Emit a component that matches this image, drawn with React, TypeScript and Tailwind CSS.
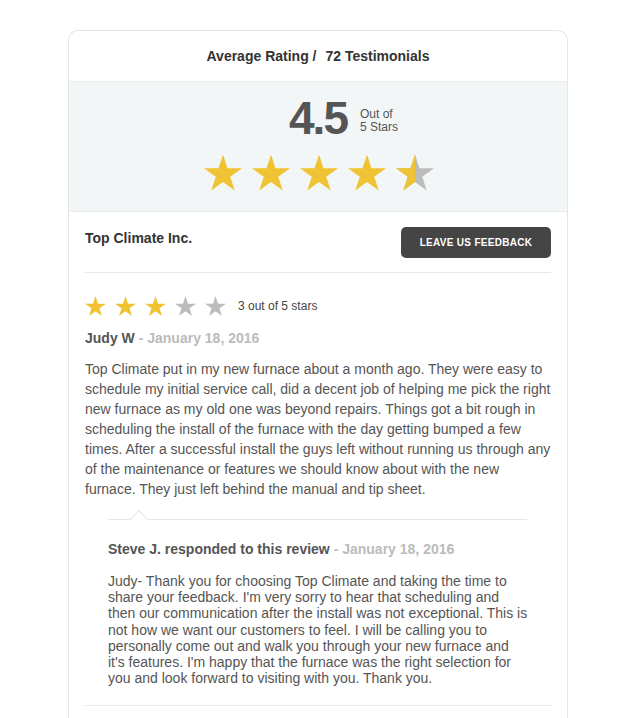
import React from "react";

const STAR = "M47.55 0 L58.78 34.55 L95.1 34.55 L65.71 55.9 L76.94 90.45 L47.55 69.1 L18.16 90.45 L29.39 55.9 L0 34.55 L36.32 34.55 Z";

const Star = ({ fill, className }: { fill: "full" | "half" | "empty"; className: string }) => (
  <svg viewBox="0 0 95.1 90.45" className={className}>
    <defs>
      <clipPath id="half-left">
        <rect x="0" y="0" width="47.55" height="90.45" />
      </clipPath>
    </defs>
    <path d={STAR} fill={fill === "full" ? "#f1c232" : "#bcbcbc"} />
    {fill === "half" && <path d={STAR} fill="#f1c232" clipPath="url(#half-left)" />}
  </svg>
);

const reply = [
  "Judy- Thank you for choosing Top Climate and taking the time to",
  "share your feedback. I'm very sorry to hear that scheduling and",
  "then our communication after the install was not exceptional. This is",
  "not how we want our customers to feel. I will be calling you to",
  "personally come out and walk you through your new furnace and",
  "it's features. I'm happy that the furnace was the right selection for",
  "you and look forward to visiting with you. Thank you.",
];

export default function App() {
  return (
    <div className="min-h-[718px] bg-white pt-[30px] font-['Liberation_Sans',Arial,sans-serif]">
      <div className="ml-[68px] w-[500px] h-[688px] overflow-hidden rounded-t-[10px] border border-b-0 border-[#e6e6e6]">
        {/* header */}
        <div className="h-[50px] flex items-center justify-center text-[14px] font-bold text-[#333]">
          <span>Average Rating /</span>
          <span className="ml-[9px]">72 Testimonials</span>
        </div>

        {/* average */}
        <div className="bg-[#f3f6f7] border-y border-[#e9eced] pt-[13px] pb-[20px]">
          <div className="grid grid-cols-[1fr_auto_1fr]">
            <div />
            <div className="text-[46px] leading-[46px] font-bold tracking-[-2px] text-[#555]">4.5</div>
            <div className="pl-[13px] pt-[13px] text-[12px] leading-[13px] text-[#555]">
              <div>Out of</div>
              <div>5 Stars</div>
            </div>
          </div>
          <div className="mt-[13px] flex justify-center gap-[10px] pl-[1px]">
            <Star fill="full" className="w-[38px] h-[37px]" />
            <Star fill="full" className="w-[38px] h-[37px]" />
            <Star fill="full" className="w-[38px] h-[37px]" />
            <Star fill="full" className="w-[38px] h-[37px]" />
            <Star fill="half" className="w-[38px] h-[37px]" />
          </div>
        </div>

        <div className="px-4">
          {/* company */}
          <div className="flex justify-between items-start pt-[15px] pb-[14px] border-b border-[#e8e8e8]">
            <div className="text-[14px] leading-[20px] font-bold text-[#333] pt-[1px]">Top Climate Inc.</div>
            <button className="w-[150px] h-[31px] rounded-[5px] bg-[#454545] text-white text-[10px] font-bold tracking-[0.3px]">
              LEAVE US FEEDBACK
            </button>
          </div>

          {/* review */}
          <div className="pt-[23px] border-b border-[#e8e8e8] pb-[19px]">
            <div className="flex items-center h-[20px]">
              <div className="flex gap-[9px]">
                <Star fill="full" className="w-[21px] h-[20px]" />
                <Star fill="full" className="w-[21px] h-[20px]" />
                <Star fill="full" className="w-[21px] h-[20px]" />
                <Star fill="empty" className="w-[21px] h-[20px]" />
                <Star fill="empty" className="w-[21px] h-[20px]" />
              </div>
              <span className="ml-[12px] text-[12px] text-[#444]">3 out of 5 stars</span>
            </div>
            <div className="mt-[12px] text-[14px] leading-[20px] font-bold text-[#555]">
              Judy W <span className="text-[#bbb]">- January 18, 2016</span>
            </div>
            <p className="mt-[11px] text-[14px] leading-[20px] text-[#555]">
              Top Climate put in my new furnace about a month ago. They were easy to schedule my initial service
              call, did a decent job of helping me pick the right new furnace as my old one was beyond repairs.
              Things got a bit rough in scheduling the install of the furnace with the day getting bumped a few
              times. After a successful install the guys left without running us through any of the maintenance or
              features we should know about with the new furnace. They just left behind the manual and tip sheet.
            </p>

            {/* response */}
            <div className="relative mt-[20px] ml-[23px] mr-[24px] border-t border-[#e6e6e6] pt-[20px]">
              <div className="absolute -top-[7.5px] left-[24px] w-[14px] h-[14px] rotate-45 bg-white border-l border-t border-[#e6e6e6]" />
              <div className="text-[14px] leading-[18px] font-bold text-[#555]">
                Steve J. responded to this review <span className="text-[#bbb]">- January 18, 2016</span>
              </div>
              <p className="mt-[15px] text-[14px] leading-[16.2px] text-[#555]">
                {reply.map((line) => (
                  <span key={line} className="block whitespace-nowrap">
                    {line}
                  </span>
                ))}
              </p>
            </div>
          </div>
        </div>
      </div>
    </div>
  );
}
